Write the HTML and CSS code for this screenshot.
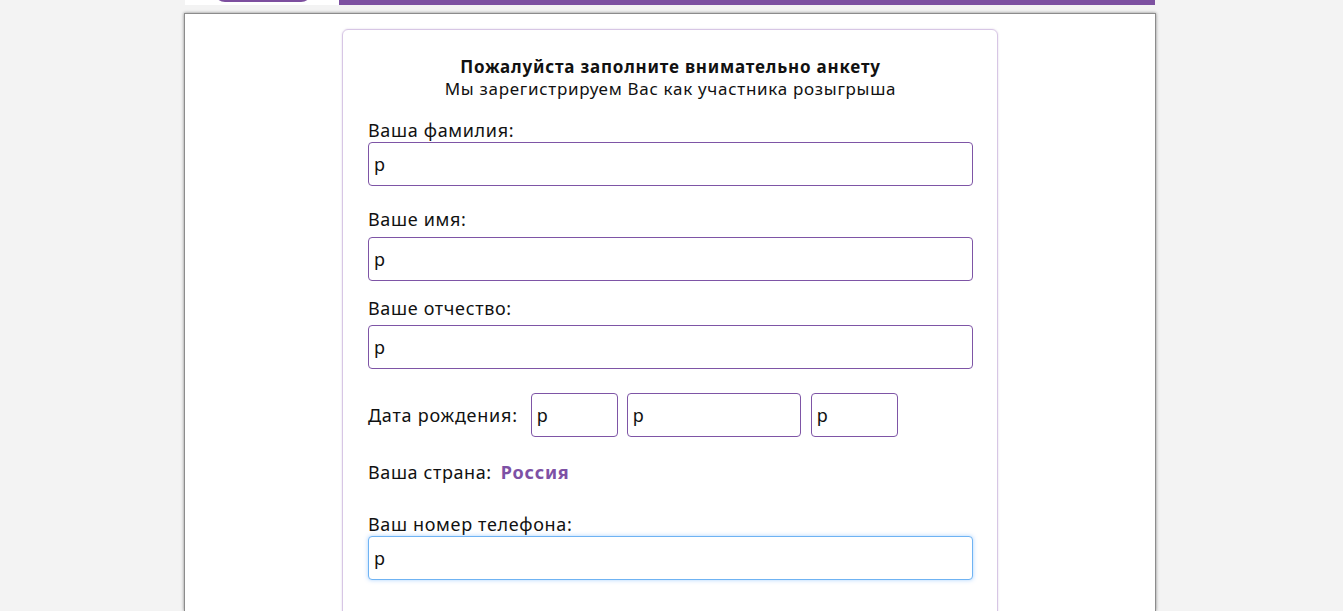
FILE: index.html
```html
<!DOCTYPE html>
<html lang="ru">
<head>
<meta charset="utf-8">
<title>Анкета</title>
<link rel="stylesheet" href="styles.css">
</head>
<body>
<div class="topbar">
  <div class="brand"><span class="pill"></span></div>
  <div class="stripe"></div>
</div>
<div class="panel">
  <form class="card">
    <h1 class="title">Пожалуйста заполните внимательно анкету</h1>
    <p class="subtitle">Мы зарегистрируем Вас как участника розыгрыша</p>

    <label class="label l1">Ваша фамилия:</label>
    <input class="field f1" type="text" value="р">

    <label class="label l2">Ваше имя:</label>
    <input class="field f2" type="text" value="р">

    <label class="label l3">Ваше отчество:</label>
    <input class="field f3" type="text" value="р">

    <div class="date-row">
      <span class="date-label">Дата рождения:</span>
      <input class="field day" type="text" value="р">
      <input class="field month" type="text" value="р">
      <input class="field year" type="text" value="р">
    </div>

    <div class="country-row">
      <span class="country-label">Ваша страна:</span>
      <span class="country">Россия</span>
    </div>

    <label class="label l4">Ваш номер телефона:</label>
    <input class="field f4 focus" type="text" value="р">
  </form>
</div>
</body>
</html>
```

FILE: styles.css
```css
html, body {
  margin: 0;
  padding: 0;
  height: 100%;
  overflow: hidden;
}
body {
  background: #f3f3f3;
  font-family: "Noto Sans", "Open Sans", sans-serif;
  color: #111;
}
.topbar {
  width: 970px;
  margin-left: calc(50% - 486.5px);
  display: flex;
  height: 5px;
}
.brand {
  width: 154px;
  background: #fff;
  position: relative;
  overflow: hidden;
}
.pill {
  position: absolute;
  left: 29px;
  top: -20px;
  width: 98px;
  height: 22px;
  border-radius: 11px;
  background: #7d4f9f;
}
.stripe {
  flex: 1;
  background: #7d51a1;
}
.panel {
  box-sizing: border-box;
  width: 972px;
  height: calc(100% - 13px);
  margin: 8px 0 0 calc(50% - 487.5px);
  overflow: hidden;
  background: #fff;
  border: 1px solid #8c8c8c;
  border-bottom: 0;
  box-shadow: 0 0 3px rgba(0, 0, 0, 0.45);
}
.card {
  box-sizing: border-box;
  width: 656px;
  margin: 15px auto 0;
  padding: 26px 24px 40px 25px;
  border: 1px solid #d7c6e5;
  border-radius: 6px;
  box-shadow: 0 0 2px rgba(126, 80, 160, 0.25);
  display: flex;
  flex-direction: column;
}
.title {
  margin: 0;
  font-size: 17px;
  font-weight: 700;
  line-height: 22px;
  letter-spacing: 0.8px;
  text-align: center;
}
.subtitle {
  margin: 0;
  font-size: 17px;
  line-height: 22px;
  letter-spacing: 0.7px;
  text-align: center;
}
.label {
  font-size: 18px;
  line-height: 22px;
  letter-spacing: 0.65px;
}
.l1 { margin-top: 19px; }
.l2 { margin-top: 22px; }
.l3 { margin-top: 16px; }
.l4 { margin-top: 30px; }
.field {
  box-sizing: border-box;
  height: 44px;
  width: 100%;
  border: 1px solid #7e55a6;
  border-radius: 4px;
  padding: 0 5px;
  margin: 0;
  font-family: inherit;
  font-size: 18px;
  color: #111;
  background: #fff;
  outline: none;
}
.f1 { margin-top: 1px; }
.f2 { margin-top: 7px; }
.f3 { margin-top: 6px; }
.f4 { margin-top: 1px; }
.focus {
  border-color: #6fb3f3;
  box-shadow: 0 0 4px rgba(90, 170, 255, 0.5);
}
.date-row {
  display: flex;
  align-items: center;
  margin-top: 24px;
}
.date-label {
  font-size: 18px;
  letter-spacing: 0.75px;
  margin-right: 13px;
}
.date-row .field {
  width: 87px;
}
.date-row .month {
  width: 174px;
  margin-left: 9px;
}
.date-row .year {
  margin-left: 10px;
}
.country-row {
  display: flex;
  align-items: center;
  height: 22px;
  margin-top: 24px;
  font-size: 18px;
  line-height: 22px;
}
.country-label {
  letter-spacing: 0.6px;
  margin-right: 9px;
}
.country {
  color: #7d51a5;
  font-weight: 700;
  font-size: 18px;
  letter-spacing: 0.8px;
}
```
